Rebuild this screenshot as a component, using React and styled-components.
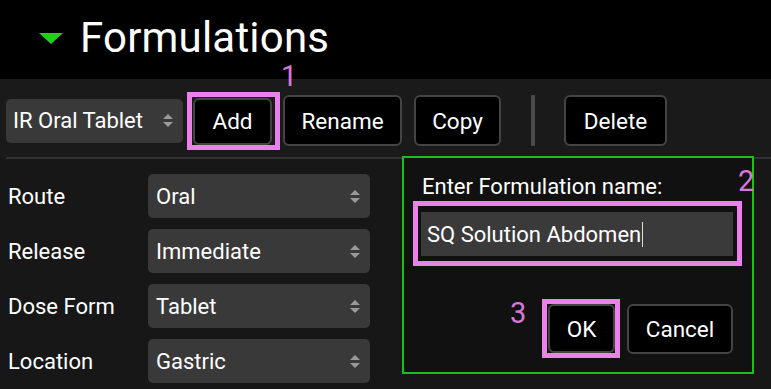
import React from "react";
import styled, { createGlobalStyle } from "styled-components";

const Global = createGlobalStyle`
  html, body { margin: 0; padding: 0; background: #191919; }
  body { font-family: Roboto, "Liberation Sans", sans-serif; color: #fff; }
  * { box-sizing: border-box; }
`;

const Page = styled.div`
  position: relative;
  width: 771px;
  height: 389px;
  overflow: hidden;
  background: #171717;
`;

const Header = styled.header`
  height: 79px;
  background: #000;
  display: flex;
  align-items: center;
  padding-left: 39px;
  gap: 17px;
`;

const Caret = styled.span`
  width: 0;
  height: 0;
  border-left: 12.5px solid transparent;
  border-right: 12.5px solid transparent;
  border-top: 11px solid #1fd11f;
  margin-top: -2px;
`;

const Title = styled.h1`
  margin: 0;
  font-size: 42px;
  font-weight: 400;
  letter-spacing: 0.2px;
  color: #fff;
  line-height: 1;
  margin-top: -4px;
`;

const Toolbar = styled.div`
  height: 78px;
  padding: 5px 0 0 6px;
  display: flex;
  align-items: center;
  background: #1a1a1a;
`;

const Divider = styled.div`
  height: 2px;
  margin-left: 6px;
  background: #333;
`;

const SelectBox = styled.div`
  width: ${(p) => p.$w}px;
  height: 44px;
  border-radius: 5px;
  background: #393939;
  display: flex;
  align-items: center;
  justify-content: space-between;
  padding: 0 ${(p) => p.$pr}px 0 ${(p) => p.$pl}px;
  font-size: 22px;
  color: #fff;
  white-space: nowrap;
`;

const Arrows = styled.span`
  display: flex;
  flex-direction: column;
  gap: 3px;
  &::before, &::after {
    content: "";
    width: 0;
    height: 0;
    border-left: 5px solid transparent;
    border-right: 5px solid transparent;
  }
  &::before { border-bottom: 5px solid #9a9a9a; }
  &::after { border-top: 5px solid #9a9a9a; }
`;

const Button = styled.button`
  width: ${(p) => p.$w}px;
  height: ${(p) => p.$h || 51}px;
  background: #000;
  border: 2px solid #444;
  border-radius: 6px;
  color: #fff;
  font-family: Roboto, "Liberation Sans", sans-serif;
  font-size: 22.5px;
  padding: 0;
  margin-left: ${(p) => p.$ml || 0}px;
  flex: none;
  white-space: nowrap;
`;

const Highlight = styled.div`
  border: 5px solid #ec80ec;
  padding: ${(p) => p.$pad};
  margin-left: ${(p) => p.$ml || 0}px;
  flex: none;
  display: flex;
`;

const VSep = styled.div`
  width: 4px;
  height: 51px;
  background: #4a4a4a;
  border-radius: 1px;
  margin: 0 29px 0 30px;
`;

const Form = styled.div`
  padding: 15px 0 0 8px;
  display: grid;
  grid-template-columns: 140px 222px;
  row-gap: 11px;
  align-items: center;
`;

const Label = styled.span`
  font-size: 22px;
  color: #fff;
`;

const Dialog = styled.div`
  position: absolute;
  left: 402px;
  top: 156px;
  width: 352px;
  height: 218px;
  border: 2px solid #17c217;
  background: #111;
  padding: 17px 10px 0 9px;
  display: flex;
  flex-direction: column;
`;

const DialogLabel = styled.div`
  font-size: 22px;
  line-height: 24px;
  margin: 0 0 2px 9px;
  color: #fff;
  white-space: nowrap;
`;

const Input = styled.div`
  height: 44px;
  flex: 1;
  background: #3a3a3a;
  display: flex;
  align-items: center;
  padding-left: 6px;
  font-size: 22px;
  color: #fff;
  white-space: nowrap;
`;

const Cursor = styled.span`
  display: inline-block;
  width: 1px;
  height: 25px;
  background: #ddd;
  margin-left: 1px;
`;

const ButtonRow = styled.div`
  display: flex;
  justify-content: flex-end;
  align-items: center;
  gap: 7px;
  margin-top: 33px;
  padding-right: 9px;
`;

const Num = styled.span`
  position: absolute;
  left: ${(p) => p.$x}px;
  top: ${(p) => p.$y}px;
  font-size: 29px;
  line-height: 1;
  color: #d977d9;
`;

const fields = [
  ["Route", "Oral"],
  ["Release", "Immediate"],
  ["Dose Form", "Tablet"],
  ["Location", "Gastric"],
];

export default function App() {
  return (
    <Page>
      <Global />
      <Header>
        <Caret />
        <Title>Formulations</Title>
      </Header>
      <Toolbar>
        <SelectBox $w={177} $pl={7} $pr={10}>
          IR Oral Tablet
          <Arrows />
        </SelectBox>
        <Highlight $ml={4} $pad="1px 3px 0 1px">
          <Button $w={79} $h={47}>Add</Button>
        </Highlight>
        <Button $w={119} $ml={3}>Rename</Button>
        <Button $w={87} $ml={12}>Copy</Button>
        <VSep />
        <Button $w={103}>Delete</Button>
      </Toolbar>
      <Divider />
      <Form>
        {fields.map(([l, v]) => (
          <React.Fragment key={l}>
            <Label>{l}</Label>
            <SelectBox $w={222} $pl={8} $pr={10}>
              {v}
              <Arrows />
            </SelectBox>
          </React.Fragment>
        ))}
      </Form>
      <Num $x={281} $y={62}>1</Num>
      <Dialog>
        <DialogLabel>Enter Formulation name:</DialogLabel>
        <Highlight $pad="6px 4px 5px 3px">
          <Input>
            SQ Solution Abdomen
            <Cursor />
          </Input>
        </Highlight>
        <ButtonRow>
          <Highlight $pad="0 0 0 1px">
            <Button $w={67} $h={49}>OK</Button>
          </Highlight>
          <Button $w={106} $h={50}>Cancel</Button>
        </ButtonRow>
        <Num $x={106} $y={141}>3</Num>
        <Num $x={334} $y={9}>2</Num>
      </Dialog>
    </Page>
  );
}
